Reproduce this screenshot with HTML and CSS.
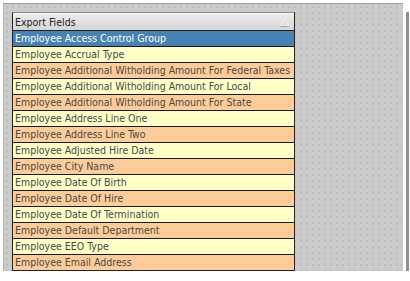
FILE: index.html
```html
<!DOCTYPE html>
<html lang="en">
<head>
    <meta charset="UTF-8">
    <title>Export Fields</title>
    <link rel="stylesheet" href="styles.css">
</head>
<body>
    <div class="frame">
        <div class="grid">
            <div class="grid-head">
                <span>Export Fields</span>
                <svg class="sort" width="11" height="9" viewBox="0 0 11 9">
                    <path d="M5.5 1 L10 8 L1 8 Z" fill="none" stroke="#f6f6f6" stroke-width="1"/>
                    <path d="M1 8.5 L10 8.5" stroke="#a8a8a8" stroke-width="1"/>
                </svg>
            </div>
            <div class="row selected">Employee Access Control Group</div>
            <div class="row even">Employee Accrual Type</div>
            <div class="row odd">Employee Additional Witholding Amount For Federal Taxes</div>
            <div class="row even">Employee Additional Witholding Amount For Local</div>
            <div class="row odd">Employee Additional Witholding Amount For State</div>
            <div class="row even">Employee Address Line One</div>
            <div class="row odd">Employee Address Line Two</div>
            <div class="row even">Employee Adjusted Hire Date</div>
            <div class="row odd">Employee City Name</div>
            <div class="row even">Employee Date Of Birth</div>
            <div class="row odd">Employee Date Of Hire</div>
            <div class="row even">Employee Date Of Termination</div>
            <div class="row odd">Employee Default Department</div>
            <div class="row even">Employee EEO Type</div>
            <div class="row odd">Employee Email Address</div>
        </div>
    </div>
</body>
</html>
```

FILE: styles.css
```css
body {
    margin: 0;
    background: #fff;
    font-family: "DejaVu Sans Condensed", "DejaVu Sans", sans-serif;
    font-size: 10.5px;
}

.frame {
    width: 391px;
    height: 259px;
    margin: 3px 0 0 3px;
    padding: 8px 0 0 8px;
    background-color: #cbcbcb;
    background-image:
        radial-gradient(circle, #bcbcbc 0.8px, transparent 1.2px);
    background-size: 6px 6px;
    border-top: 1px solid #9a9a9a;
    border-left: 1px solid #b4b4b4;
    box-shadow: 3px 2px 0 #fff, 6px 9px 0 #909090;
}

.grid {
    width: 281px;
    border: 1px solid #222;
    border-top-color: #888;
}

.grid-head {
    display: flex;
    align-items: center;
    justify-content: space-between;
    height: 16px;
    padding: 0 4px 0 2px;
    background: linear-gradient(#ececec, #d6d6d6);
    border-top: 1px solid #fafafa;
    border-bottom: 1px solid #222;
    color: #222;
}

.sort {
    display: block;
}

.row {
    height: 15px;
    line-height: 15px;
    padding-left: 2px;
    border-bottom: 1px solid #1a1a1a;
    color: #484848;
    white-space: nowrap;
    overflow: hidden;
}

.row:last-child {
    border-bottom: none;
}

.selected {
    background: #4682b4;
    color: #fff;
}

.even {
    background: #ffffc8;
}

.odd {
    background: #ffcc99;
}
```
